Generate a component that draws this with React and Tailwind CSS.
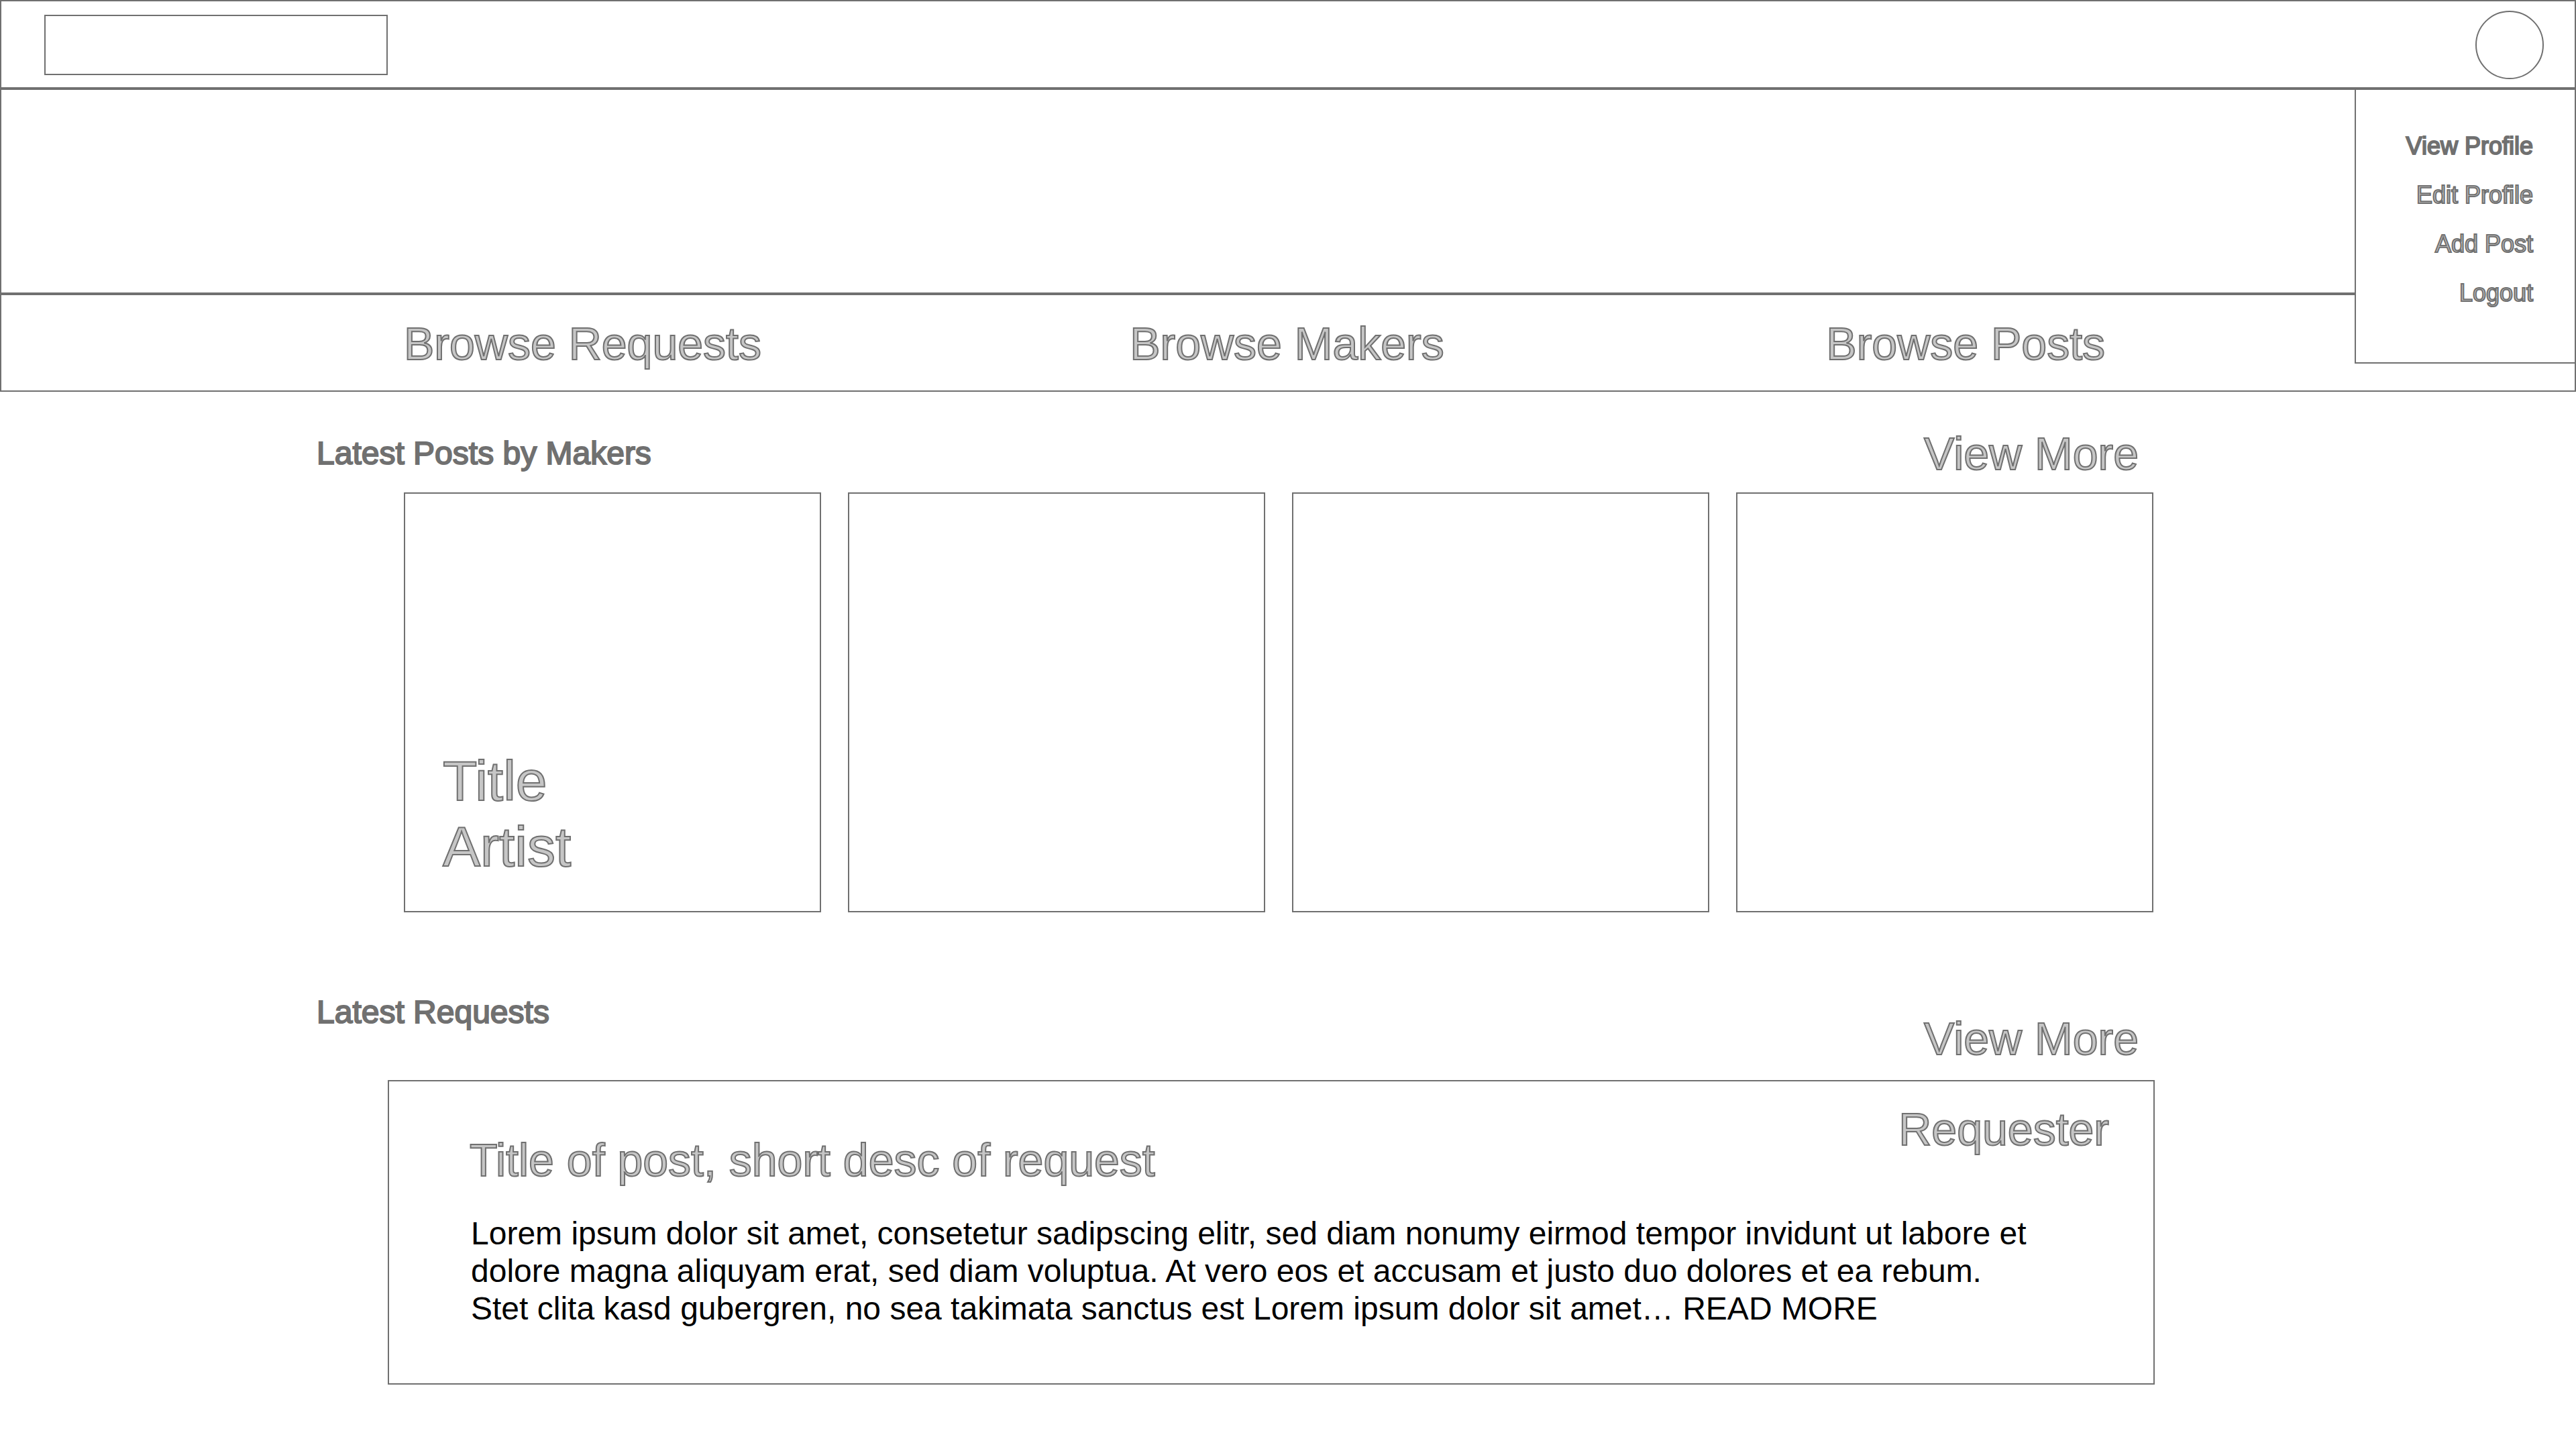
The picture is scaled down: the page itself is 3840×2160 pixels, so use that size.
const outlined =
  "text-[#c6c6c6] [-webkit-text-stroke:2px_#707070]";
const solid = "text-[#707070] [-webkit-text-stroke:2px_#707070]";
const large = "text-[68px] leading-[80px] font-normal whitespace-nowrap";
const heading = "text-[48px] leading-[56px] font-normal whitespace-nowrap";

const menuItems = ["View Profile", "Edit Profile", "Add Post", "Logout"];
const navItems = ["Browse Requests", "Browse Makers", "Browse Posts"];
const posts = [{ title: "Title", artist: "Artist" }, {}, {}, {}];

function ProfileMenu() {
  return (
    <div className="absolute top-[132px] right-0 flex w-[330px] flex-col items-end border-2 border-[#707070] bg-white pt-[47px] pr-[62px] pb-[67px]">
      {menuItems.map((item, i) => (
        <a
          key={item}
          href="#"
          className={`text-[36px] leading-[73px] whitespace-nowrap ${i === 0 ? solid : outlined}`}
        >
          {item}
        </a>
      ))}
    </div>
  );
}

function Header() {
  return (
    <header className="relative">
      <div className="flex h-[132px] items-center justify-between border-2 border-[#707070] pt-[2px] pr-[46px] pl-16">
        <input
          type="text"
          aria-label="Search"
          className="h-[90px] w-[512px] border-2 border-[#707070] px-6 text-[36px] outline-none"
        />
        <button
          type="button"
          aria-label="Profile"
          className="size-[102px] rounded-full border-2 border-[#707070]"
        />
      </div>
      <div className="h-[306px] border-2 border-[#707070]" />
      <nav className="grid h-[146px] grid-cols-[1083fr_1039fr_420fr] items-center border-2 border-[#707070] pt-[2px] pr-[696px] pl-[600px]">
        {navItems.map((item) => (
          <a key={item} href="#" className={`${large} ${outlined}`}>
            {item}
          </a>
        ))}
      </nav>
      <ProfileMenu />
    </header>
  );
}

function LatestPosts() {
  return (
    <section>
      <div className="flex items-center justify-between pr-[24px]">
        <h2 className={`${heading} ${solid}`}>Latest Posts by Makers</h2>
        <a href="#" className={`${large} ${outlined}`}>
          View More
        </a>
      </div>
      <div className="mt-[18px] mr-[2px] ml-[130px] grid grid-cols-4 gap-10">
        {posts.map((post, i) => (
          <article
            key={i}
            className="flex aspect-[622/626] flex-col justify-end border-2 border-[#707070] pb-[47px] pl-14 text-[84px] leading-[98px]"
          >
            {post.title && <h3 className={outlined}>{post.title}</h3>}
            {post.artist && <p className={outlined}>{post.artist}</p>}
          </article>
        ))}
      </div>
    </section>
  );
}

function LatestRequests() {
  return (
    <section className="mt-[121px]">
      <div className="flex items-start justify-between pr-[24px]">
        <h2 className={`${heading} ${solid}`}>Latest Requests</h2>
        <a href="#" className={`mt-[27px] ${large} ${outlined}`}>
          View More
        </a>
      </div>
      <article className="mt-[22px] ml-[106px] border-2 border-[#707070] pt-[31px] pb-[83px] pl-[120px]">
        <div className="flex items-start justify-between pr-[66px]">
          <h3 className={`mt-[46px] ${large} ${outlined}`}>
            Title of post, short desc of request
          </h3>
          <span className={`${large} ${outlined}`}>Requester</span>
        </div>
        <p className="mt-[42px] pr-[172px] pl-[2px] text-[48px] leading-[56px] text-black">
          Lorem ipsum dolor sit amet, consetetur sadipscing elitr, sed diam
          nonumy eirmod tempor invidunt ut labore et dolore magna aliquyam erat,
          sed diam voluptua. At vero eos et accusam et justo duo dolores et ea
          rebum. Stet clita kasd gubergren, no sea takimata sanctus est Lorem
          ipsum dolor sit amet… <a href="#">READ MORE</a>
        </p>
      </article>
    </section>
  );
}

export default function App() {
  return (
    <div className="min-h-screen bg-white font-['Liberation_Sans',Arial,sans-serif]">
      <Header />
      <main className="pt-[52px] pr-[628px] pb-24 pl-[472px]">
        <LatestPosts />
        <LatestRequests />
      </main>
    </div>
  );
}
